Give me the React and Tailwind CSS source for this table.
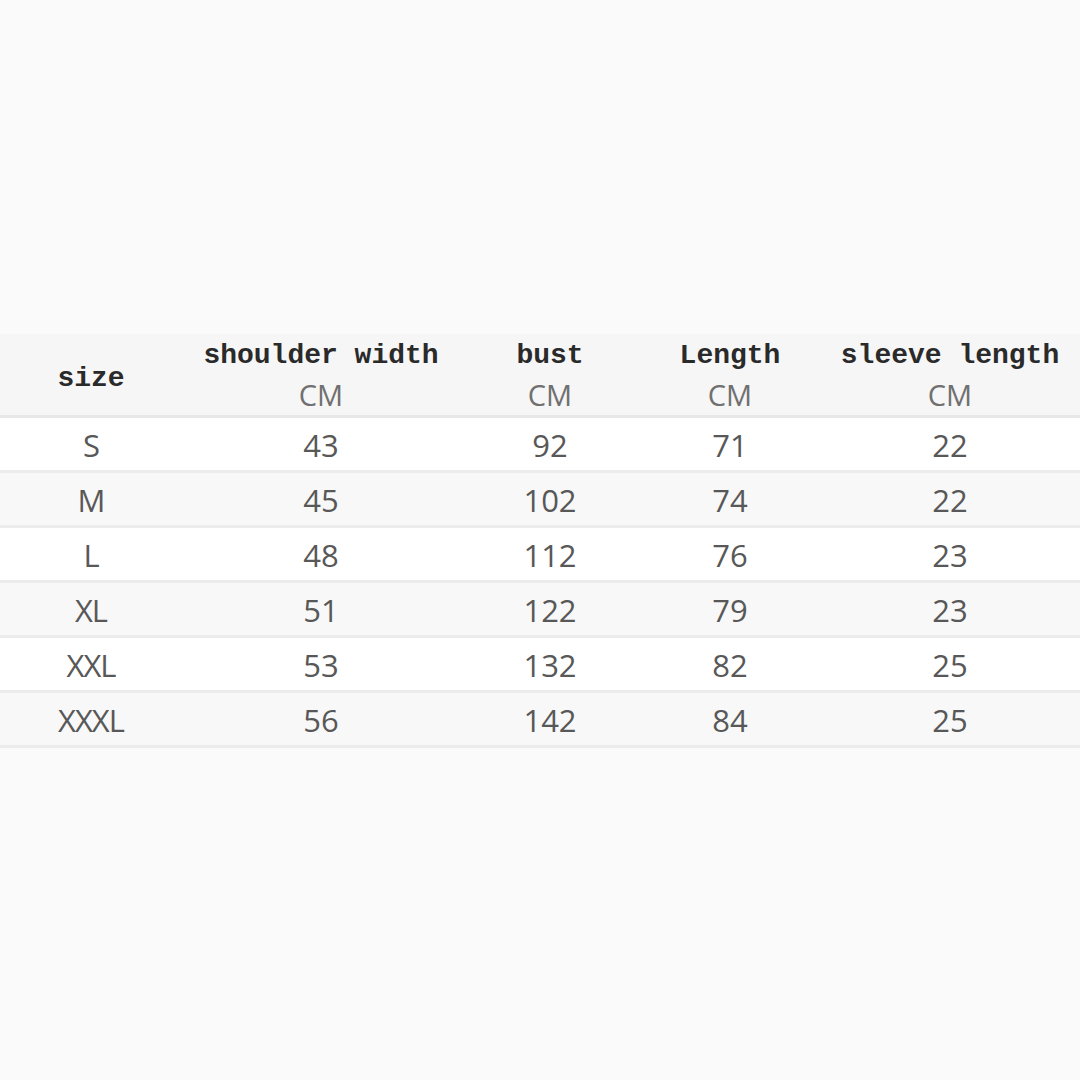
export default function App() {
  const rows = [
    ['S', '43', '92', '71', '22'],
    ['M', '45', '102', '74', '22'],
    ['L', '48', '112', '76', '23'],
    ['XL', '51', '122', '79', '23'],
    ['XXL', '53', '132', '82', '25'],
    ['XXXL', '56', '142', '84', '25'],
  ];

  const cols = ['w-[182px]', 'w-[278px]', 'w-[180px]', 'w-[180px]', 'w-[260px]'];
  const heads = ['shoulder width', 'bust', 'Length', 'sleeve length'];

  const mono = "font-['Liberation_Mono','Courier_New',monospace]";
  const sans = "font-['Open_Sans','Noto_Sans',sans-serif]";

  return (
    <div className="w-[1080px] h-[1080px] bg-[#fafafa] flex flex-col">
      <div className="h-[334px]" />

      <div className="flex h-[84px] bg-[#f6f6f6] border-b-[3px] border-[#e8e8e8]">
        <div className={`${cols[0]} flex items-center justify-center pt-2 ${mono} text-[28px] font-bold text-[#2a2a2a]`}>
          size
        </div>
        {heads.map((h, i) => (
          <div key={h} className={`${cols[i + 1]} flex flex-col items-center justify-center`}>
            <span className={`${mono} text-[28px] font-bold text-[#2a2a2a] leading-[40px]`}>{h}</span>
            <span className={`${sans} text-[29px] text-[#707070] leading-[38px]`}>CM</span>
          </div>
        ))}
      </div>

      {rows.map((r, i) => (
        <div
          key={r[0]}
          className={`flex h-[55px] border-b-[3px] border-[#ececec] ${i % 2 === 0 ? 'bg-white' : 'bg-[#f8f8f8]'}`}
        >
          {r.map((v, j) => (
            <div
              key={j}
              className={`${cols[j]} flex items-center justify-center pt-[3px] ${sans} text-[31px] text-[#585858] ${j === 0 ? 'tracking-[-1px]' : ''}`}
            >
              {v}
            </div>
          ))}
        </div>
      ))}
    </div>
  );
}
